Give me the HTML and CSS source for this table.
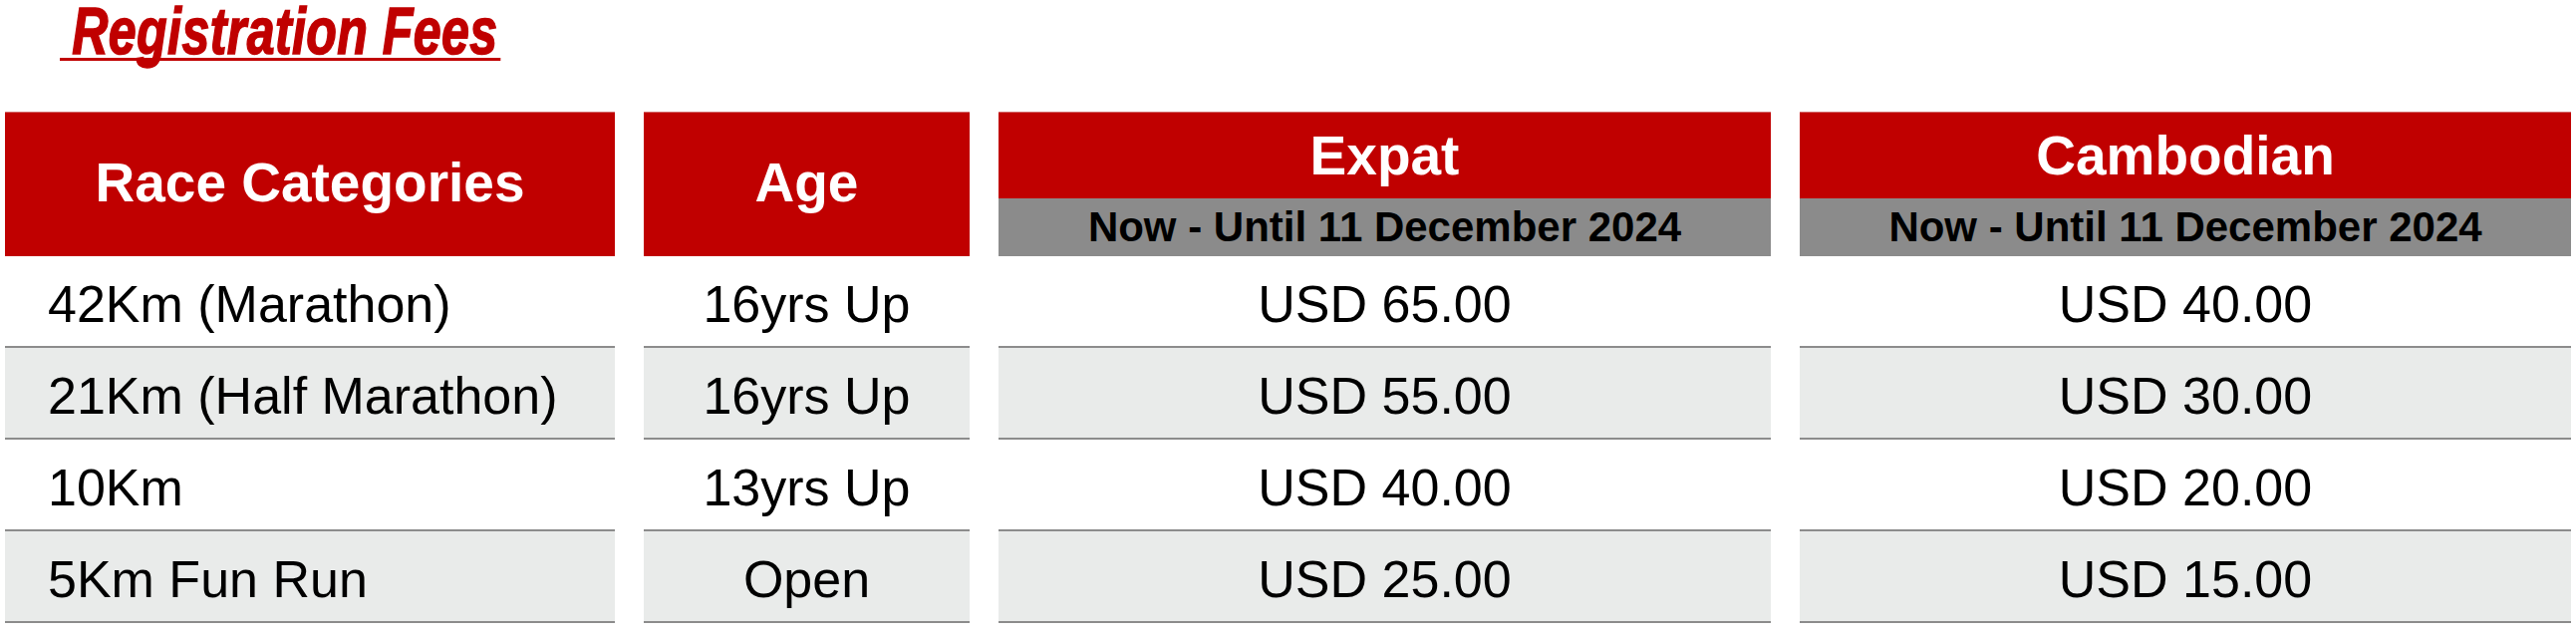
FILE: index.html
```html
<!DOCTYPE html>
<html lang="en">
<head>
<meta charset="utf-8">
<title>Registration Fees</title>
<link rel="stylesheet" href="styles.css">
</head>
<body>
<div class="page">
  <h1 class="title"><span class="title-text">Registration Fees</span></h1>
  <div class="fees">
    <div class="hcell">Race Categories</div>
    <div class="hcell">Age</div>
    <div class="hgroup"><div class="hmain">Expat</div><div class="hsub">Now - Until 11 December 2024</div></div>
    <div class="hgroup"><div class="hmain">Cambodian</div><div class="hsub">Now - Until 11 December 2024</div></div>

    <div class="cell left">42Km (Marathon)</div>
    <div class="cell">16yrs Up</div>
    <div class="cell">USD 65.00</div>
    <div class="cell">USD 40.00</div>

    <div class="cell left alt">21Km (Half Marathon)</div>
    <div class="cell alt">16yrs Up</div>
    <div class="cell alt">USD 55.00</div>
    <div class="cell alt">USD 30.00</div>

    <div class="cell left">10Km</div>
    <div class="cell">13yrs Up</div>
    <div class="cell">USD 40.00</div>
    <div class="cell">USD 20.00</div>

    <div class="cell left alt">5Km Fun Run</div>
    <div class="cell alt">Open</div>
    <div class="cell alt">USD 25.00</div>
    <div class="cell alt">USD 15.00</div>
  </div>
</div>
</body>
</html>
```

FILE: styles.css
```css
html, body {
  margin: 0;
  padding: 0;
  background: #ffffff;
}

body {
  font-family: "Liberation Sans", Arial, sans-serif;
  color: #000;
}

.page {
  width: 2585px;
  height: 641px;
  overflow: hidden;
}

.title {
  margin: 0;
  height: 112px;
  padding-left: 60px;
  padding-top: 4px;
  box-sizing: border-box;
}

.title-text {
  display: inline-block;
  font-family: "Liberation Sans", Arial, sans-serif;
  font-weight: 700;
  font-style: italic;
  font-size: 66px;
  line-height: 54px;
  color: #c00000;
  -webkit-text-stroke: 1.6px #c00000;
  transform: scaleX(0.76);
  transform-origin: left top;
  border-bottom: 3px solid #c00000;
  padding: 0 4px 0 16px;
  letter-spacing: 0.5px;
}

.fees {
  display: grid;
  grid-template-columns: 612px 327px 775px 774px;
  grid-template-rows: 145px repeat(4, 92px);
  column-gap: 29px;
  padding-left: 5px;
}

.hcell {
  background: #c00000;
  color: #fff;
  font-weight: 700;
  font-size: 55px;
  display: flex;
  align-items: center;
  justify-content: center;
  padding-bottom: 4px;
  box-sizing: border-box;
  border-top: 1px solid #d26a6a;
}

.hgroup {
  display: flex;
  flex-direction: column;
  border-top: 1px solid #d26a6a;
}

.hmain {
  background: #c00000;
  color: #fff;
  font-weight: 700;
  font-size: 55px;
  height: 86px;
  display: flex;
  align-items: center;
  justify-content: center;
}

.hsub {
  background: #8b8b8b;
  color: #000;
  font-weight: 700;
  font-size: 42px;
  flex: 1;
  display: flex;
  align-items: center;
  justify-content: center;
}

.cell {
  font-size: 52px;
  display: flex;
  align-items: center;
  justify-content: center;
  border-bottom: 2px solid #8c8c8c;
  padding-top: 6px;
  box-sizing: border-box;
  background: #ffffff;
}

.cell.left {
  justify-content: flex-start;
  padding-left: 43px;
}

.cell.alt {
  background: #e9ebea;
}
```
